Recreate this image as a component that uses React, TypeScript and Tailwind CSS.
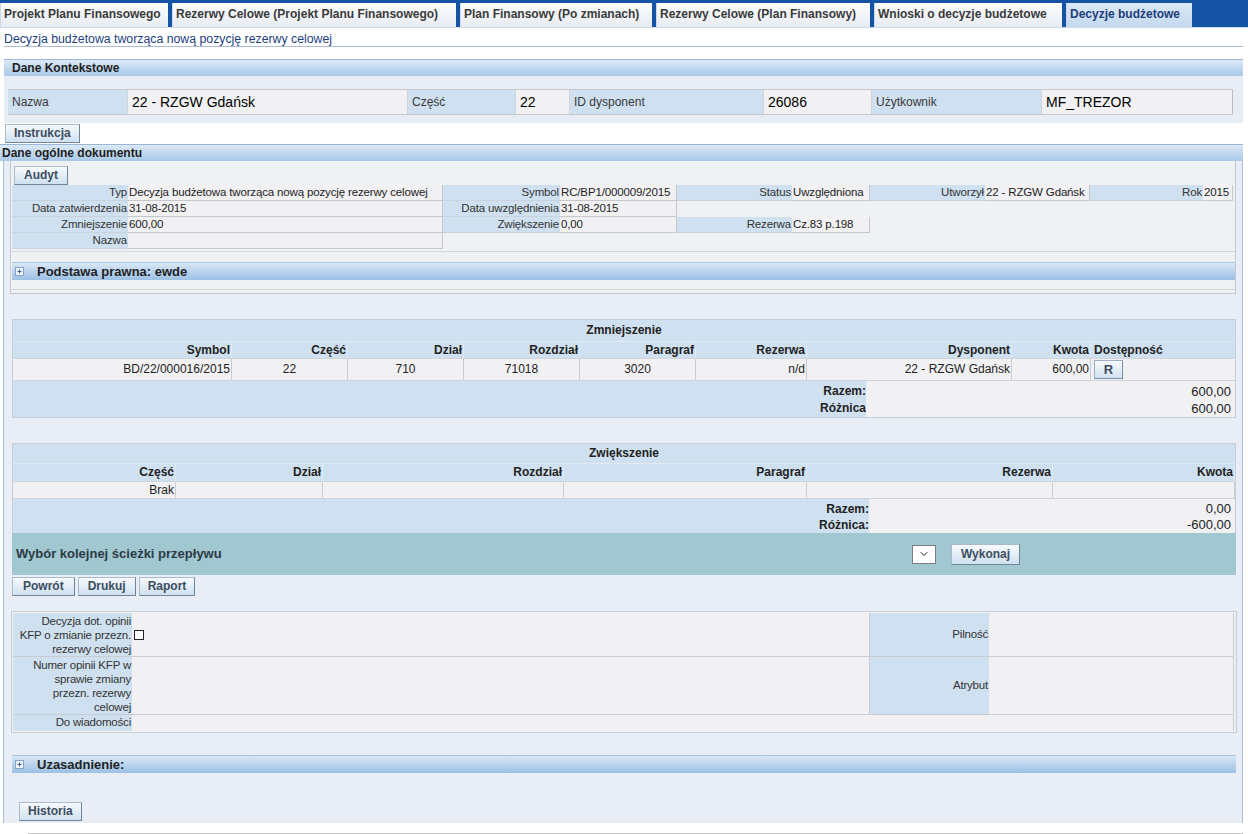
import React from "react";
import { ChevronDown } from "lucide-react";

function Btn({ children, className = "" }: { children: React.ReactNode; className?: string }) {
  return (
    <div
      className={`h-[19px] px-[8px] border border-[#a9bacb] border-r-[#71859a] border-b-[#71859a] bg-linear-to-b from-[#f7fafd] to-[#cfe0f0] text-[12px] font-bold text-[#3d4d60] leading-[17px] whitespace-nowrap ${className}`}
    >
      {children}
    </div>
  );
}

function PlusIcon() {
  return (
    <svg width="9" height="9" viewBox="0 0 9 9">
      <rect x="0.5" y="0.5" width="8" height="8" fill="#eef4fa" stroke="#86a4c6" />
      <path d="M2.5 4.5h4M4.5 2.5v4" stroke="#3f5f85" strokeWidth="1" />
    </svg>
  );
}

function SectionHeader({ title }: { title: string }) {
  return (
    <div className="h-[18px] bg-linear-to-b from-[#d8e7f6] to-[#9cc0e5] border-t border-[#aac5e1] flex items-center">
      <div className="ml-[3px] flex">
        <PlusIcon />
      </div>
      <span className="ml-[13px] text-[13px] font-bold text-[#222] leading-[16px]">{title}</span>
    </div>
  );
}

const tabs = [
  { t: "Projekt Planu Finansowego", w: "w-[168px]", a: false },
  { t: "Rezerwy Celowe (Projekt Planu Finansowego)", w: "w-[284px]", a: false },
  { t: "Plan Finansowy (Po zmianach)", w: "w-[192px]", a: false },
  { t: "Rezerwy Celowe (Plan Finansowy)", w: "w-[214px]", a: false },
  { t: "Wnioski o decyzje budżetowe", w: "w-[188px]", a: false },
  { t: "Decyzje budżetowe", w: "w-[126px]", a: true },
];

const ctx = [
  { t: "Nazwa", w: "w-[120px]", l: true },
  { t: "22 - RZGW Gdańsk", w: "w-[280px]", l: false },
  { t: "Część", w: "w-[108px]", l: true },
  { t: "22", w: "w-[54px]", l: false },
  { t: "ID dysponent", w: "w-[194px]", l: true },
  { t: "26086", w: "w-[108px]", l: false },
  { t: "Użytkownik", w: "w-[170px]", l: true },
  { t: "MF_TREZOR", w: "w-[191px]", l: false },
];

type Cell = { t: string; w: string; l: boolean };

const docRows: Cell[][] = [
  [
    { t: "Typ", w: "w-[116px]", l: true },
    { t: "Decyzja budżetowa tworząca nową pozycję rezerwy celowej", w: "w-[315px]", l: false },
    { t: "Symbol", w: "w-[117px]", l: true },
    { t: "RC/BP1/000009/2015", w: "w-[117px]", l: false },
    { t: "Status", w: "w-[115px]", l: true },
    { t: "Uwzględniona", w: "w-[78px]", l: false },
    { t: "Utworzył", w: "w-[115px]", l: true },
    { t: "22 - RZGW Gdańsk", w: "w-[105px]", l: false },
    { t: "Rok", w: "w-[113px]", l: true },
    { t: "2015", w: "w-[30px]", l: false },
  ],
  [
    { t: "Data zatwierdzenia", w: "w-[116px]", l: true },
    { t: "31-08-2015", w: "w-[315px]", l: false },
    { t: "Data uwzględnienia", w: "w-[117px]", l: true },
    { t: "31-08-2015", w: "w-[117px]", l: false },
  ],
  [
    { t: "Zmniejszenie", w: "w-[116px]", l: true },
    { t: "600,00", w: "w-[315px]", l: false },
    { t: "Zwiększenie", w: "w-[117px]", l: true },
    { t: "0,00", w: "w-[117px]", l: false },
    { t: "Rezerwa", w: "w-[115px]", l: true },
    { t: "Cz.83 p.198", w: "w-[78px]", l: false },
  ],
  [
    { t: "Nazwa", w: "w-[116px]", l: true },
    { t: "", w: "w-[315px]", l: false },
  ],
];

const zmCols = [
  { h: "Symbol", v: "BD/22/000016/2015", w: "w-[219px]", a: "text-right pr-[1px]" },
  { h: "Część", v: "22", w: "w-[116px]", a: "text-center" },
  { h: "Dział", v: "710", w: "w-[116px]", a: "text-center" },
  { h: "Rozdział", v: "71018", w: "w-[116px]", a: "text-center" },
  { h: "Paragraf", v: "3020", w: "w-[116px]", a: "text-center" },
  { h: "Rezerwa", v: "n/d", w: "w-[111px]", a: "text-right pr-[1px]" },
  { h: "Dysponent", v: "22 - RZGW Gdańsk", w: "w-[205px]", a: "text-right pr-[1px]" },
  { h: "Kwota", v: "600,00", w: "w-[79px]", a: "text-right pr-[1px]" },
];

const zwCols = [
  { h: "Część", v: "Brak", w: "w-[163px]" },
  { h: "Dział", v: "", w: "w-[147px]" },
  { h: "Rozdział", v: "", w: "w-[241px]" },
  { h: "Paragraf", v: "", w: "w-[243px]" },
  { h: "Rezerwa", v: "", w: "w-[246px]" },
  { h: "Kwota", v: "", w: "flex-1" },
];

export default function App() {
  return (
    <div className="w-[1248px] h-[834px] bg-white overflow-hidden font-['Liberation_Sans',Arial,sans-serif] text-[12px] text-[#222]">
      {/* Tabs */}
      <div className="h-[28px] bg-[#1553a5] flex items-end gap-[4px] border-b border-[#cfdcec]">
        {tabs.map((tab) => (
          <div
            key={tab.t}
            className={`${tab.w} h-[24px] pl-[3px] border-l border-[#c9d8ea] whitespace-nowrap overflow-hidden font-bold text-[12px] leading-[23px] ${
              tab.a
                ? "bg-linear-to-b from-[#dbe8f5] to-[#c4d9ef] text-[#1d3e7b]"
                : "bg-linear-to-b from-[#fbfcfd] to-[#e7ecf2] text-[#3a3a3a]"
            }`}
          >
            {tab.t}
          </div>
        ))}
      </div>

      {/* Title */}
      <div className="ml-[4px] w-[1239px] h-[19px] border-b border-[#a9bcd3] pt-[4px] text-[12.3px] leading-[14px] text-[#1e3f7e]">
        Decyzja budżetowa tworząca nową pozycję rezerwy celowej
      </div>

      {/* Dane Kontekstowe */}
      <div className="ml-[4px] w-[1239px] mt-[12px]">
        <div className="h-[17px] bg-linear-to-b from-[#dce9f6] to-[#a8c8e8] border-t border-[#98b6d7] pl-[8px] font-bold text-[12px] leading-[16px] text-[#1e1e1e]">
          Dane Kontekstowe
        </div>
        <div className="bg-[#e8edf5] pt-[13px] pb-[8px] pl-[4px]">
          <div className="flex w-[1225px] h-[26px] border-t border-b border-[#c6c9ce]">
            {ctx.map((c, i) => (
              <div
                key={i}
                className={`${c.w} h-full pl-[4px] whitespace-nowrap overflow-hidden border-r border-[#d2d6dc] ${
                  c.l
                    ? "bg-[#cfe0f0] text-[12px] leading-[24px] text-[#3a3a3a]"
                    : "bg-[#f1f1f3] text-[14px] leading-[24px] text-black"
                } ${i === ctx.length - 1 ? "border-r-[#b9bdc3]" : ""}`}
              >
                {c.t}
              </div>
            ))}
          </div>
        </div>
      </div>

      {/* Instrukcja */}
      <div className="flex ml-[5px] mt-[1px]">
        <Btn>Instrukcja</Btn>
      </div>

      {/* Dane ogólne dokumentu header */}
      <div className="w-[1243px] mt-[1px] h-[17px] bg-linear-to-b from-[#dce9f6] to-[#a8c8e8] border-t border-[#98b6d7] pl-[2px] font-bold text-[12px] leading-[16px] text-[#1e1e1e]">
        Dane ogólne dokumentu
      </div>

      {/* Body */}
      <div className="ml-[3px] w-[1240px] h-[662px] border-l border-r border-[#a9bfd9] bg-[#e9eef6]">
        {/* Section box */}
        <div className="ml-[6px] w-[1226px] border-l border-r border-b border-[#c3c9d1] bg-[#f0f1f3]">
          <div className="pt-[5px] pl-[3px] flex">
            <Btn className="px-[9px]">Audyt</Btn>
          </div>
          <div className="ml-[1px]">
            {docRows.map((row, ri) => (
              <div key={ri} className="flex h-[16px]">
                {row.map((c, ci) => (
                  <div
                    key={ci}
                    className={`${c.w} h-[16px] whitespace-nowrap overflow-hidden leading-[15px] text-[11.5px] tracking-[-0.15px] border-b ${
                      c.l
                        ? "bg-[#cfe0f0] text-right pr-[1px] text-[#333] border-[#c9d3de]"
                        : "bg-[#f1f1f3] pl-[1px] text-[#222] border-r border-[#c4c7cc]"
                    }`}
                  >
                    {c.t}
                  </div>
                ))}
              </div>
            ))}
          </div>
          <div className="mt-[2px] border-t border-[#d3d6db] pt-[10px]">
            <div className="ml-[1px]">
              <SectionHeader title="Podstawa prawna: ewde" />
            </div>
            <div className="mt-[9px] border-t border-[#d3d6db] h-[4px]" />
          </div>
        </div>

        {/* Zmniejszenie */}
        <div className="ml-[8px] w-[1224px] mt-[25px] border border-[#c5cfdb]">
          <div className="h-[21px] bg-[#cfe0f0] text-center font-bold text-[12px] leading-[21px] text-[#222]">
            Zmniejszenie
          </div>
          <div className="flex h-[17px] bg-[#cfe0f0] border-t border-[#e2e9f1]">
            {zmCols.map((c) => (
              <div
                key={c.h}
                className={`${c.w} h-full text-right pr-[1px] font-bold leading-[16px] text-[#222] border-r border-[#e2e9f1]`}
              >
                {c.h}
              </div>
            ))}
            <div className="flex-1 pl-[3px] font-bold leading-[16px] text-[#222]">Dostępność</div>
          </div>
          <div className="flex h-[22px] bg-[#f1f1f3] border-t border-[#d0d4da]">
            {zmCols.map((c) => (
              <div
                key={c.h}
                className={`${c.w} h-full ${c.a} leading-[21px] text-[#222] border-r border-[#c9ccd1]`}
              >
                {c.v}
              </div>
            ))}
            <div className="flex-1 pl-[3px] pt-[1px] flex">
              <div className="w-[29px] h-[19px] border border-[#9cb0c6] border-r-[#7a8ea4] border-b-[#7a8ea4] bg-linear-to-b from-[#f6f9fc] to-[#d3e2f0] text-center font-bold text-[13px] leading-[17px] text-[#3d4d60]">
                R
              </div>
            </div>
          </div>
          <div className="flex h-[37px] border-t border-[#d0d4da]">
            <div className="w-[853px] bg-[#cfe0f0] text-right font-bold leading-[17px] pt-[2px] text-[#222]">
              <div>Razem:</div>
              <div>Różnica</div>
            </div>
            <div className="flex-1 bg-[#f1f1f3] text-right pr-[4px] pt-[2px] text-[13px] leading-[17px] text-[#222]">
              <div>600,00</div>
              <div>600,00</div>
            </div>
          </div>
        </div>

        {/* Zwiększenie */}
        <div className="ml-[8px] w-[1224px] mt-[25px] border-t border-l border-r border-[#c5cfdb]">
          <div className="h-[19px] bg-[#cfe0f0] text-center font-bold text-[12px] leading-[19px] text-[#222]">
            Zwiększenie
          </div>
          <div className="flex h-[18px] bg-[#cfe0f0] border-t border-[#e2e9f1]">
            {zwCols.map((c) => (
              <div
                key={c.h}
                className={`${c.w} h-full text-right pr-[1px] font-bold leading-[17px] text-[#222] border-r border-[#e2e9f1]`}
              >
                {c.h}
              </div>
            ))}
          </div>
          <div className="flex h-[17px] bg-[#f1f1f3] border-t border-[#d0d4da]">
            {zwCols.map((c) => (
              <div
                key={c.h}
                className={`${c.w} h-full text-right pr-[1px] leading-[16px] text-[#222] border-r border-[#c9ccd1]`}
              >
                {c.v}
              </div>
            ))}
          </div>
          <div className="flex h-[35px] border-t border-[#d0d4da]">
            <div className="w-[856px] bg-[#cfe0f0] text-right font-bold leading-[16px] pt-[2px] text-[#222]">
              <div>Razem:</div>
              <div>Różnica:</div>
            </div>
            <div className="flex-1 bg-[#f1f1f3] text-right pr-[4px] pt-[2px] text-[13px] leading-[16px] text-[#222]">
              <div>0,00</div>
              <div>-600,00</div>
            </div>
          </div>
        </div>

        {/* Wybór kolejnej ścieżki */}
        <div className="ml-[8px] w-[1224px] h-[42px] bg-[#a1c7d1] flex items-center">
          <div className="w-[900px] pl-[4px] font-bold text-[13px] text-[#2c3a44]">
            Wybór kolejnej ścieżki przepływu
          </div>
          <div className="w-[24px] h-[19px] bg-white border border-[#7d7d7d] flex items-center justify-center">
            <ChevronDown size={12} strokeWidth={2} color="#222" />
          </div>
          <Btn className="ml-[15px] h-[21px] leading-[19px] px-[9px]">Wykonaj</Btn>
        </div>

        {/* Buttons */}
        <div className="ml-[8px] mt-[2px] flex gap-[3px]">
          <Btn className="px-[10px]">Powrót</Btn>
          <Btn className="px-[9px]">Drukuj</Btn>
          <Btn>Raport</Btn>
        </div>

        {/* Form */}
        <div className="ml-[7px] mt-[15px] w-[1226px] border border-[#c8cdd4] bg-[#eef0f3] p-[1px]">
          <div className="grid grid-cols-[119px_738px_119px_245px] text-[11.5px] tracking-[-0.2px]">
            <div className="h-[44px] bg-[#cfe0f0] text-right pr-[1px] leading-[14px] text-[#333] pt-[1px] border-b border-[#c9ccd1] whitespace-nowrap">
              Decyzja dot. opinii
              <br />
              KFP o zmianie przezn.
              <br />
              rezerwy celowej
            </div>
            <div className="h-[44px] bg-[#f1f1f3] border-b border-r border-[#c9ccd1] flex items-center pl-[2px]">
              <div className="w-[10px] h-[10px] border border-[#222] bg-white" />
            </div>
            <div className="h-[44px] bg-[#cfe0f0] text-right pr-[1px] text-[#333] flex items-center justify-end border-b border-[#c9ccd1]">
              Pilność
            </div>
            <div className="h-[44px] bg-[#f1f1f3] border-b border-[#c9ccd1] border-r" />

            <div className="h-[58px] bg-[#cfe0f0] text-right pr-[1px] leading-[14px] text-[#333] pt-[1px] border-b border-[#c9ccd1] whitespace-nowrap">
              Numer opinii KFP w
              <br />
              sprawie zmiany
              <br />
              przezn. rezerwy
              <br />
              celowej
            </div>
            <div className="h-[58px] bg-[#f1f1f3] border-b border-r border-[#c9ccd1]" />
            <div className="h-[58px] bg-[#cfe0f0] text-right pr-[1px] text-[#333] flex items-center justify-end border-b border-[#c9ccd1]">
              Atrybut
            </div>
            <div className="h-[58px] bg-[#f1f1f3] border-b border-[#c9ccd1] border-r" />

            <div className="h-[16px] bg-[#cfe0f0] text-right pr-[1px] leading-[15px] text-[#333]">Do wiadomości</div>
            <div className="col-span-3 h-[16px] bg-[#f1f1f3] border-r border-[#c9ccd1]" />
          </div>
        </div>

        {/* Uzasadnienie */}
        <div className="ml-[8px] w-[1224px] mt-[22px]">
          <SectionHeader title="Uzasadnienie:" />
        </div>

        {/* Historia */}
        <div className="ml-[15px] mt-[29px] flex">
          <Btn>Historia</Btn>
        </div>
      </div>

      <div className="ml-[28px] mt-[10px] w-[1215px] border-t border-[#c8c8c8]" />
    </div>
  );
}
